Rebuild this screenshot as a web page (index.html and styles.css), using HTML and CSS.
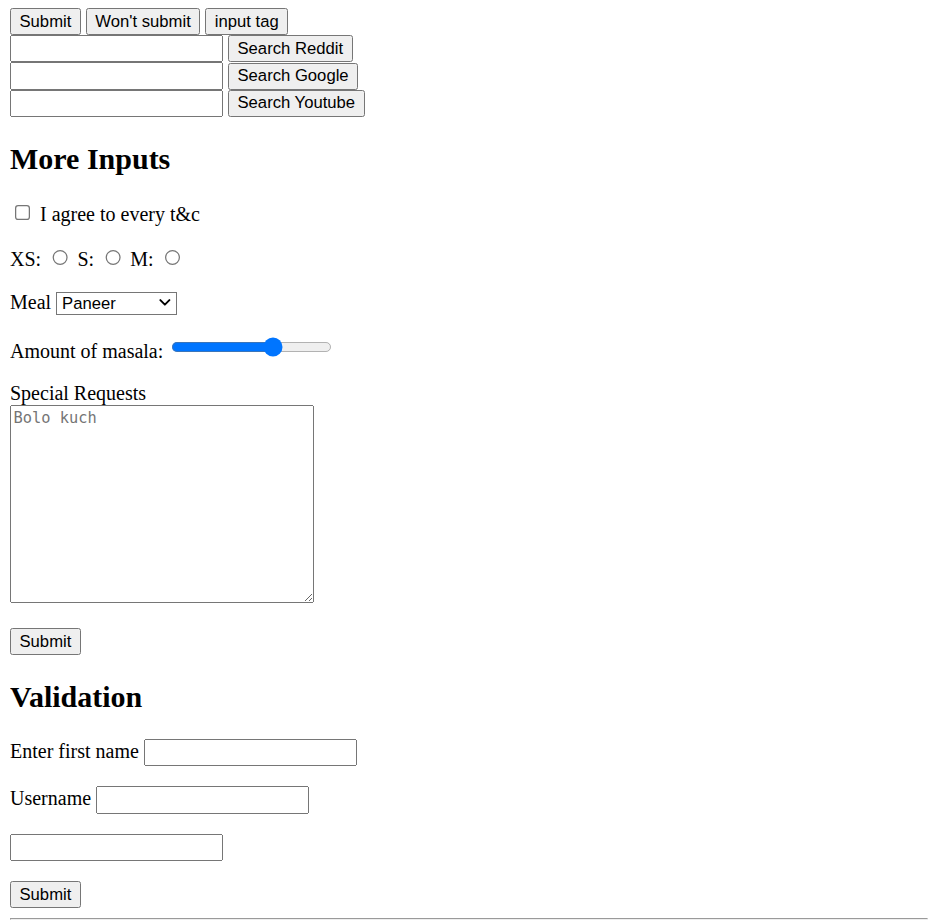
FILE: index.html
```html
<!DOCTYPE html>
<html lang="en">
<head>
<meta charset="utf-8">
<title>Forms</title>
<link rel="stylesheet" href="styles.css">
</head>
<body class="page">
<form class="bar" action="/test">
<button class="btn">Submit</button>
<button class="btn" type="button">Won't submit</button>
<input class="btn" type="submit" value="input tag">
</form>
<form class="bar" action="/reddit"><input class="field" type="text" name="q"> <button class="btn">Search Reddit</button></form>
<form class="bar" action="/google"><input class="field" type="text" name="q"> <button class="btn">Search Google</button></form>
<form class="bar" action="/youtube"><input class="field" type="text" name="search_query"> <button class="btn">Search Youtube</button></form>

<h2 class="heading">More Inputs</h2>
<form class="stack" action="/test">
<p class="row"><input class="tick" type="checkbox" id="agree"> <label for="agree">I agree to every t&amp;c</label></p>
<p class="row"><label for="xs">XS:</label> <input class="tick" type="radio" name="size" id="xs"> <label for="s">S:</label> <input class="tick" type="radio" name="size" id="s"> <label for="m">M:</label> <input class="tick" type="radio" name="size" id="m"></p>
<p class="row"><label for="meal">Meal</label> <span class="pick-wrap"><select class="pick" id="meal" name="meal"><option>Paneer</option><option>Chicken</option><option>Dal</option></select><svg class="chev" viewBox="0 0 10 6" width="9.4" height="5.4" aria-hidden="true"><path d="M1 1 L5 5 L9 1" fill="none" stroke="#000" stroke-width="1.7" stroke-linecap="round" stroke-linejoin="round"/></svg></span></p>
<p class="row"><label for="masala">Amount of masala:</label> <input class="slide" type="range" id="masala" min="0" max="100" value="65"></p>
<p class="row"><label for="req">Special Requests</label><br><textarea class="note" id="req" placeholder="Bolo kuch"></textarea></p>
<button class="btn">Submit</button>
</form>

<h2 class="heading">Validation</h2>
<form class="stack" action="/test">
<p class="row"><label for="first">Enter first name</label> <input class="field" type="text" id="first"></p>
<p class="row"><label for="user">Username</label> <input class="field" type="text" id="user"></p>
<p class="row"><input class="field" type="text"></p>
<button class="btn">Submit</button>
</form>
<hr class="rule">
</body>
</html>
```
FILE: styles.css
```css
.page {
  zoom: 1.25;
  margin: 6.4px 8px 8px;
  font-family: "Liberation Serif", "Times New Roman", serif;
  font-size: 16px;
  color: #000;
  background: #fff;
}

.bar {
  margin: 0;
}

.btn {
  box-sizing: border-box;
  height: 21.6px;
  font-family: "Liberation Sans", Arial, sans-serif;
  font-size: 13.333px;
}

.field {
  box-sizing: border-box;
  width: 170.4px;
  height: 21.9px;
  font-family: "Liberation Sans", Arial, sans-serif;
  font-size: 13.333px;
}

.heading {
  font-size: 1.5em;
  font-weight: bold;
  margin: 0.83em 0;
}

.stack {
  margin: 0;
}

.row {
  margin: 1em 0;
}

.pick-wrap {
  position: relative;
  display: inline-block;
}

.pick {
  -webkit-appearance: none;
  appearance: none;
  box-sizing: border-box;
  width: 96.5px;
  height: 18.2px;
  margin: 0;
  padding: 0 0 0 4px;
  border: 1px solid #767676;
  border-radius: 0;
  background: #fff;
  color: #000;
  font-family: "Liberation Sans", Arial, sans-serif;
  font-size: 13.333px;
}

.chev {
  position: absolute;
  right: 4.6px;
  top: 6.3px;
  pointer-events: none;
}

.note {
  box-sizing: border-box;
  width: 243.2px;
  height: 158.4px;
  font-family: "DejaVu Sans Mono", "Liberation Mono", monospace;
  font-size: 12.3px;
}

.note::placeholder {
  color: #757575;
}

.rule {
  margin: 0.5em 0;
}
```
